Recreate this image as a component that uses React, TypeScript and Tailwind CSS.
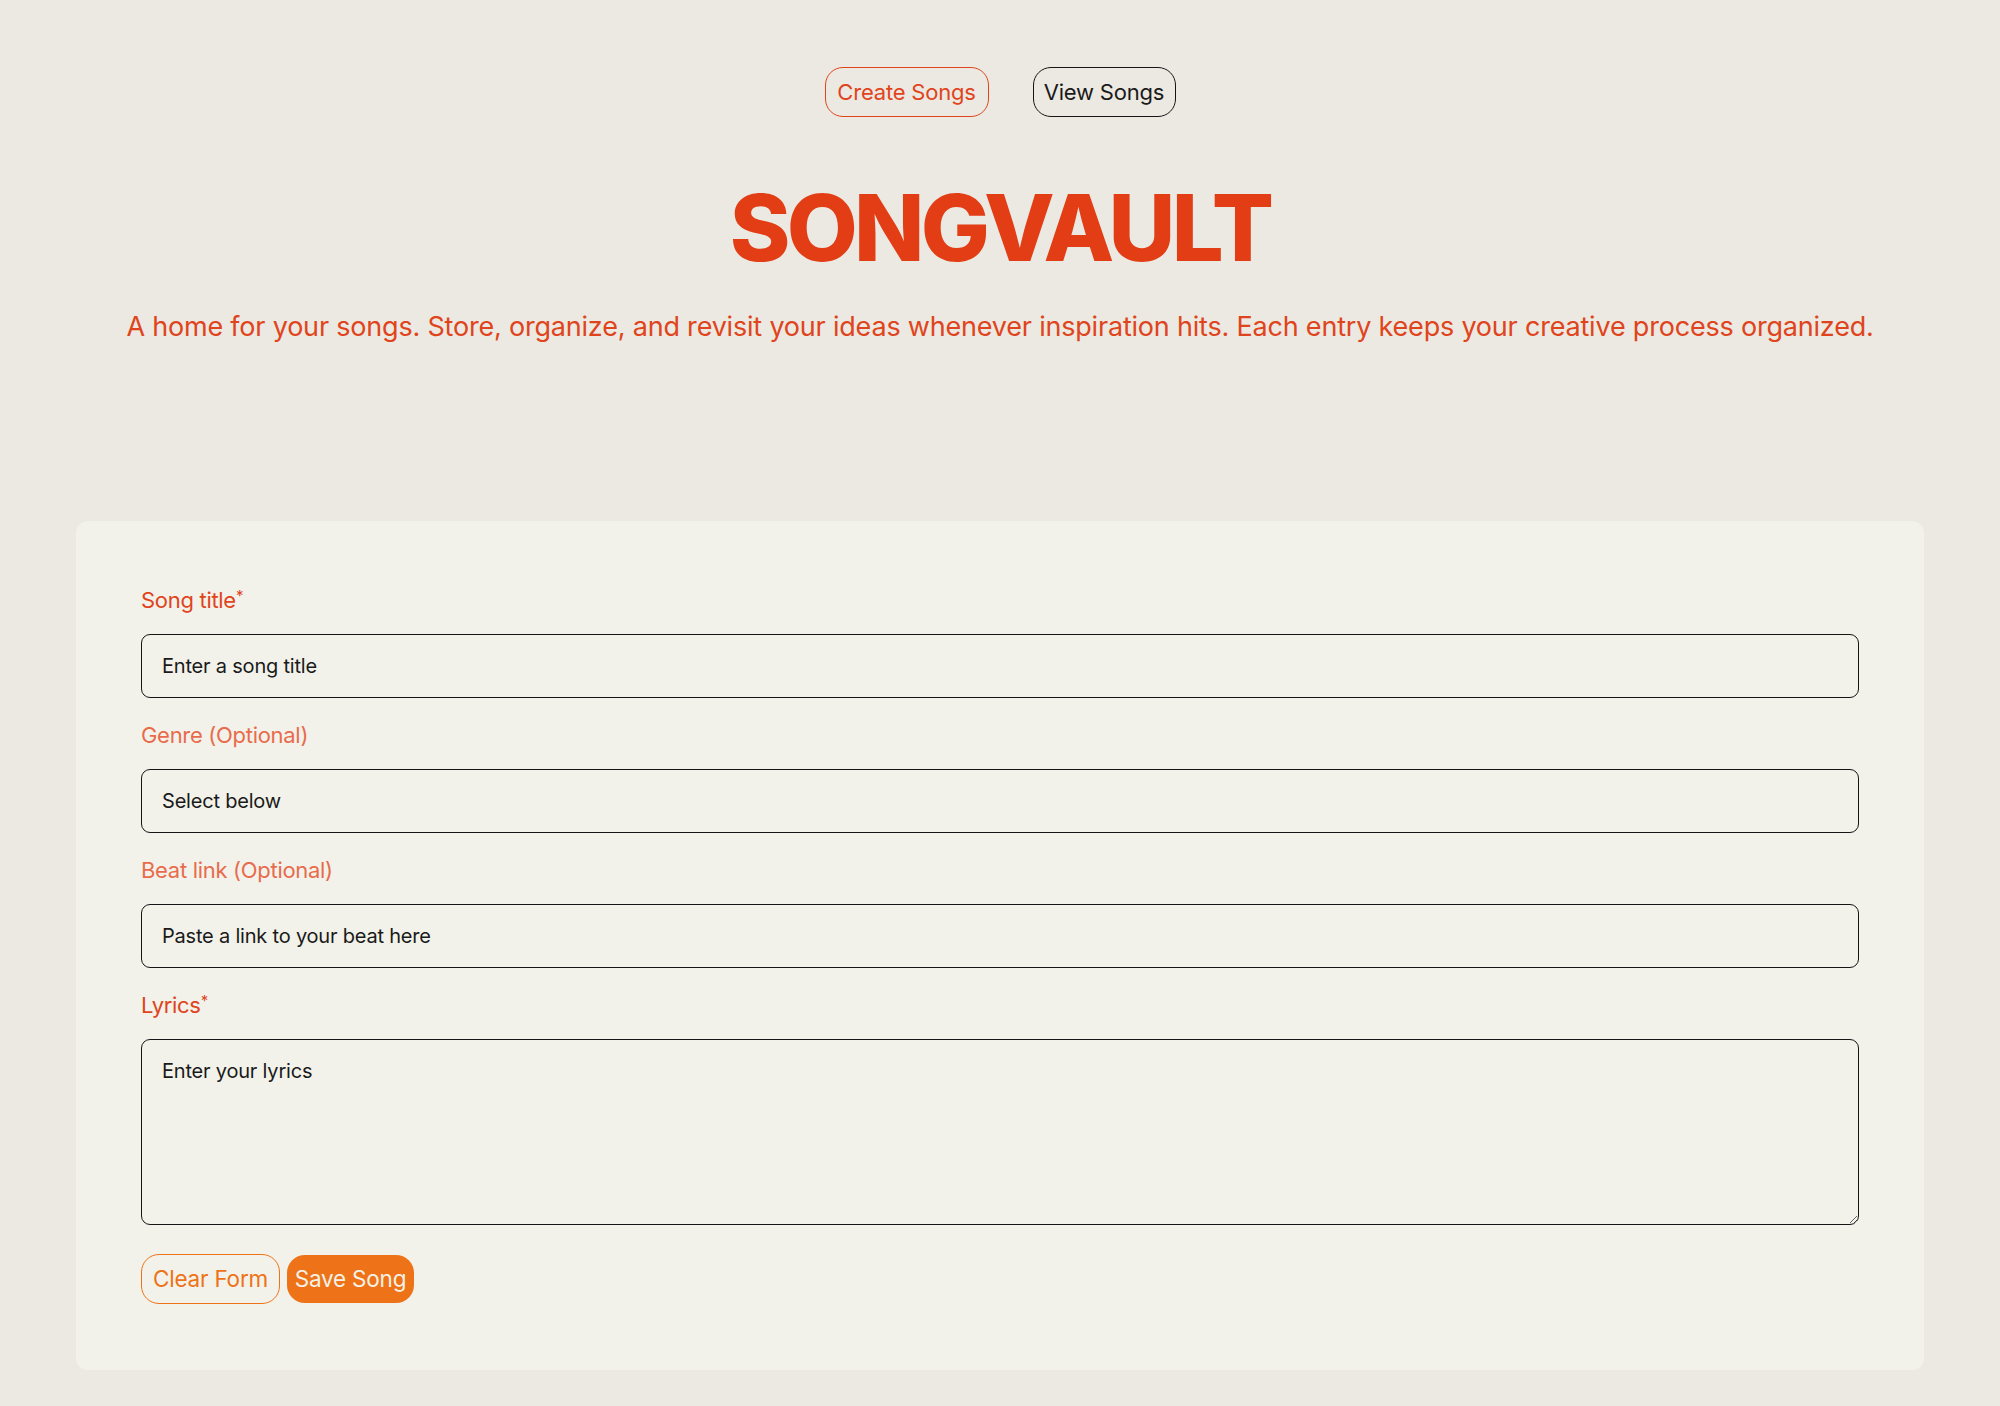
import React from "react";

export default function App() {
  const font = { fontFamily: "Inter, 'Noto Sans', sans-serif" };
  const inputCls =
    "h-[64px] w-full rounded-[9px] border-[1.5px] border-[#151515] bg-transparent px-[20px] text-[20px] text-[#1a1a1a] placeholder:text-[#1a1a1a] outline-none tracking-[-0.2px]";
  return (
    <div style={font} className="min-h-[1406px] w-full bg-[#ebe9e1] pt-[67px] pb-[36px]">
      <nav className="flex justify-center gap-[44px]">
        <button className="h-[50px] w-[164px] rounded-[18px] border-[1.5px] border-[#e0441c] text-[22px] text-[#e0441c] tracking-[-0.2px]">
          Create Songs
        </button>
        <button className="h-[50px] w-[143px] rounded-[18px] border-[1.5px] border-[#151515] text-[22px] text-[#1a1a1a] tracking-[-0.2px]">
          View Songs
        </button>
      </nav>
      <h1 className="mt-[65px] text-center text-[92px] font-extrabold leading-none tracking-[-3.8px] text-[#e23d15]">
        SONGVAULT
      </h1>
      <p className="mt-[36px] text-center text-[27px] leading-[34px] text-[#e0441c] tracking-[-0.2px]">
        A home for your songs. Store, organize, and revisit your ideas whenever inspiration hits. Each entry keeps your creative process organized.
      </p>

      <form className="mx-[76px] mt-[177px] rounded-[12px] bg-[#f2f2ea] px-[65px] pt-[63px] pb-[66px]">
        <div className="flex flex-col gap-[21px]">
          <div className="flex flex-col gap-[18px]">
            <label className="h-[32px] text-[22px] leading-[32px] text-[#e0441c] tracking-[-0.3px]">
              Song title<span className="text-[15px] leading-none align-[7px]">*</span>
            </label>
            <input placeholder="Enter a song title" className={inputCls} />
          </div>
          <div className="flex flex-col gap-[18px]">
            <label className="h-[32px] text-[22px] leading-[32px] text-[#e86c4c] tracking-[-0.3px]">Genre (Optional)</label>
            <input placeholder="Select below" className={inputCls} />
          </div>
          <div className="flex flex-col gap-[18px]">
            <label className="h-[32px] text-[22px] leading-[32px] text-[#e86c4c] tracking-[-0.3px]">Beat link (Optional)</label>
            <input placeholder="Paste a link to your beat here" className={inputCls} />
          </div>
          <div className="flex flex-col gap-[18px]">
            <label className="h-[32px] text-[22px] leading-[32px] text-[#e0441c] tracking-[-0.3px]">
              Lyrics<span className="text-[15px] leading-none align-[7px]">*</span>
            </label>
            <textarea
              placeholder="Enter your lyrics"
              className="block h-[186px] w-full rounded-[9px] border-[1.5px] border-[#151515] bg-transparent px-[20px] py-[16px] text-[20px] leading-[30px] text-[#1a1a1a] placeholder:text-[#1a1a1a] outline-none tracking-[-0.2px]"
            />
          </div>
        </div>
        <div className="mt-[29px] flex items-center gap-[7px]">
          <button type="button" className="h-[50px] w-[139px] rounded-[18px] border-[1.5px] border-[#ee7318] text-[22.5px] text-[#ee7318] tracking-[-0.2px]">
            Clear Form
          </button>
          <button type="button" className="h-[48px] w-[127px] rounded-[18px] bg-[#ee7318] text-[22.5px] text-[#f4f1e6] tracking-[-0.2px]">
            Save Song
          </button>
        </div>
      </form>
    </div>
  );
}
